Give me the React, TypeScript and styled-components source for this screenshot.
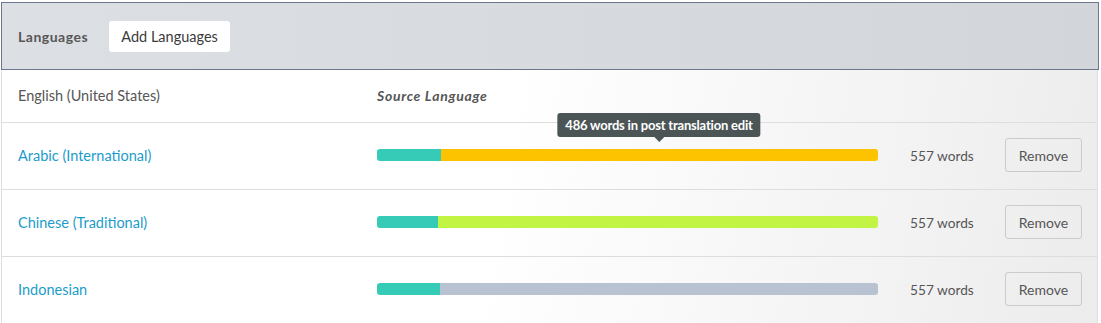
import React from "react";
import styled, { createGlobalStyle } from "styled-components";

const Global = createGlobalStyle`
  html, body { margin: 0; padding: 0; background: #ffffff; }
  body { font-family: Lato, "Open Sans", sans-serif; color: #555; }
`;

const Page = styled.div`
  padding: 2px 0 0 1px;
  width: 1098px;
  height: 321px;
  overflow: hidden;
`;

const Header = styled.div`
  display: flex;
  align-items: center;
  gap: 21px;
  height: 66px;
  padding: 0 16px;
  border: 1px solid #6d768a;
  background: linear-gradient(90deg, #dcdfe3 0%, #d2d5d9 100%);
`;

const Title = styled.span`
  font-size: 14px;
  font-weight: 700;
  letter-spacing: 0.5px;
  color: #575757;
`;

const AddButton = styled.button`
  height: 31px;
  width: 121px;
  border: none;
  border-radius: 3px;
  background: #fff;
  font-family: inherit;
  font-size: 14.5px;
  color: #3a3a3a;
  padding: 0;
`;

const Body = styled.div`
  border-left: 1px solid #dedede;
  border-right: 1px solid #dedede;
  margin-right: 1px;
  background: linear-gradient(100deg, #ffffff 45%, #ececed 100%);
`;

const Row = styled.div<{ $h: number }>`
  display: grid;
  grid-template-columns: 359px 501px 127px 77px;
  align-items: center;
  height: ${(p) => p.$h}px;
  padding-left: 16px;
  padding-bottom: 2px;
  box-sizing: border-box;
  border-bottom: 1px solid #dddddd;
  position: relative;
`;

const Name = styled.span<{ $link?: boolean }>`
  font-size: 14.5px;
  color: ${(p) => (p.$link ? "#1b9ccb" : "#565656")};
`;

const SourceLabel = styled.span`
  font-size: 14px;
  font-weight: 700;
  font-style: italic;
  letter-spacing: 0.7px;
  color: #565656;
`;

const BarWrap = styled.div`
  position: relative;
  height: 12px;
`;

const Bar = styled.div`
  display: flex;
  height: 12px;
  border-radius: 3px;
  overflow: hidden;
`;

const Segment = styled.div<{ $color: string; $grow?: boolean }>`
  background: ${(p) => p.$color};
  flex: ${(p) => (p.$grow ? "1 1 auto" : "0 0 auto")};
`;

const Tooltip = styled.div`
  position: absolute;
  left: 282px;
  transform: translateX(-50%);
  top: -36px;
  height: 24px;
  padding: 0 8px;
  display: flex;
  align-items: center;
  border-radius: 3px;
  background: #4b5556;
  color: #fff;
  font-size: 13px;
  font-weight: 700;
  letter-spacing: -0.2px;
  white-space: nowrap;
  &::after {
    content: "";
    position: absolute;
    left: 50%;
    bottom: -5px;
    margin-left: -5px;
    border-left: 5px solid transparent;
    border-right: 5px solid transparent;
    border-top: 5px solid #4b5556;
  }
`;

const Words = styled.span`
  padding-left: 32px;
  font-size: 13.7px;
  color: #555;
`;

const RemoveButton = styled.button`
  height: 34px;
  width: 77px;
  border: 1px solid #cbcbcb;
  border-radius: 3px;
  background: transparent;
  font-family: inherit;
  font-size: 14px;
  color: #555;
  padding: 0;
`;

type Lang = { name: string; done: number; color: string; tip?: string };

const langs: Lang[] = [
  { name: "Arabic (International)", done: 64, color: "#fdc300", tip: "486 words in post translation edit" },
  { name: "Chinese (Traditional)", done: 61, color: "#c2f444" },
  { name: "Indonesian", done: 63, color: "#b9c2d0" },
];

export default function App() {
  return (
    <>
      <Global />
      <Page>
        <Header>
          <Title>Languages</Title>
          <AddButton>Add Languages</AddButton>
        </Header>
        <Body>
          <Row $h={53}>
            <Name>English (United States)</Name>
            <SourceLabel>Source Language</SourceLabel>
          </Row>
          {langs.map((l) => (
            <Row $h={67} key={l.name}>
              <Name $link>{l.name}</Name>
              <BarWrap>
                {l.tip && <Tooltip>{l.tip}</Tooltip>}
                <Bar>
                  <Segment $color="#36cbb6" style={{ width: l.done }} />
                  <Segment $color={l.color} $grow />
                </Bar>
              </BarWrap>
              <Words>557 words</Words>
              <RemoveButton>Remove</RemoveButton>
            </Row>
          ))}
        </Body>
      </Page>
    </>
  );
}
